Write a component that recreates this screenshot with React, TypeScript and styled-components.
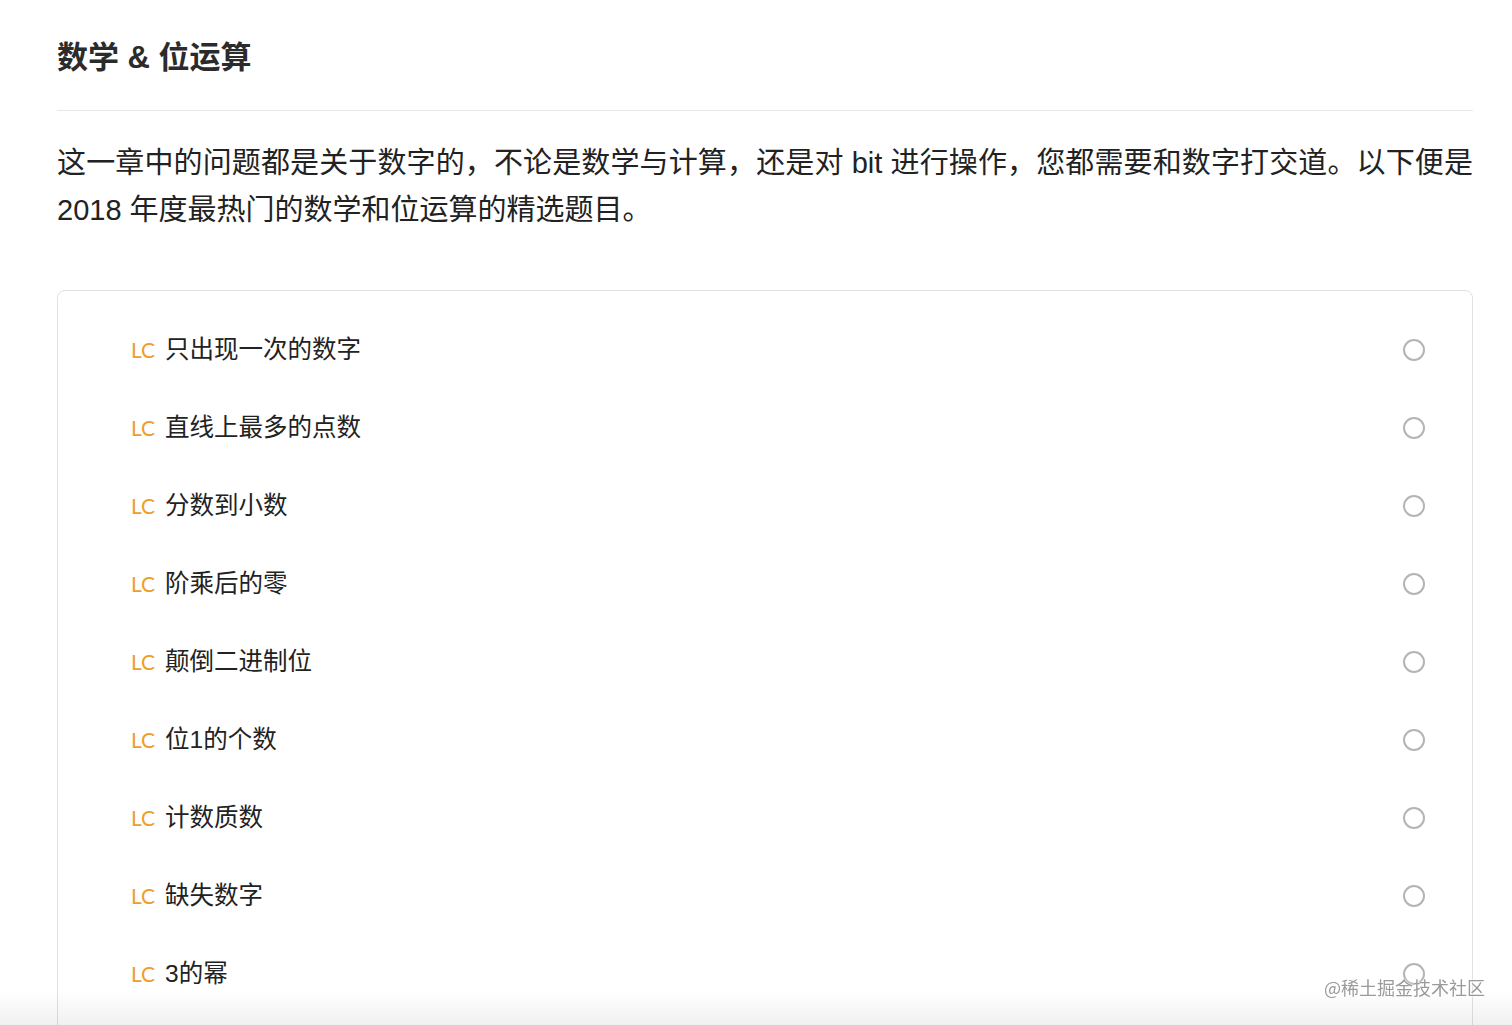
import React from 'react';
import styled, { createGlobalStyle } from 'styled-components';

const GlobalStyle = createGlobalStyle`
  html, body {
    margin: 0;
    padding: 0;
    background: #fff;
    overflow: hidden;
  }
  body {
    font-family: "Liberation Sans", "Noto Sans CJK SC", sans-serif;
    color: #262626;
  }
`;

const Page = styled.main`
  padding: 37px 39px 0 57px;
`;

const Title = styled.h2`
  margin: 0;
  font-size: 31px;
  line-height: 42px;
  font-weight: 700;
  color: #2b2b2b;
  padding-bottom: 31px;
  border-bottom: 1px solid #e8e8e8;
`;

const Intro = styled.p`
  margin: 29px 0 0;
  font-size: 29px;
  line-height: 47px;
  color: #222;
  text-align: justify;
`;

const Card = styled.section`
  margin-top: 56px;
  border: 1px solid #e2e2e2;
  border-radius: 8px;
  padding: 20px 47px 20px 73px;
`;

const Row = styled.div`
  display: flex;
  align-items: center;
  height: 78px;
`;

const Tag = styled.span`
  font-family: Lato, "Liberation Sans", sans-serif;
  font-weight: 400;
  font-size: 21px;
  line-height: 26px;
  color: #f09c2c;
  width: 34px;
  flex-shrink: 0;
`;

const Name = styled.span`
  flex: 1;
  font-size: 24.5px;
  line-height: 30px;
  padding-bottom: 1px;
  color: #222;
`;

const Check = styled.span`
  width: 18px;
  height: 18px;
  border: 2px solid #b4b4b4;
  border-radius: 50%;
  flex-shrink: 0;
`;

const Fade = styled.div`
  position: fixed;
  left: 0;
  right: 0;
  bottom: 0;
  height: 34px;
  background: linear-gradient(rgba(0, 0, 0, 0), rgba(0, 0, 0, 0.06));
  pointer-events: none;
`;

const Watermark = styled.div`
  position: fixed;
  right: 27px;
  bottom: 27px;
  font-family: "Noto Sans CJK SC", sans-serif;
  font-size: 18px;
  line-height: 22px;
  color: #9a9a9a;
  text-shadow: 0 0 2px #fff, 0 0 2px #fff;
  pointer-events: none;
`;

const problems = [
  '只出现一次的数字',
  '直线上最多的点数',
  '分数到小数',
  '阶乘后的零',
  '颠倒二进制位',
  '位1的个数',
  '计数质数',
  '缺失数字',
  '3的幂',
];

const App: React.FC = () => {
  return (
    <>
      <GlobalStyle />
      <Page>
        <Title>数学 &amp; 位运算</Title>
        <Intro>
          这一章中的问题都是关于数字的，不论是数学与计算，还是对 bit 进行操作，您都需要和数字打交道。以下便是
          2018 年度最热门的数学和位运算的精选题目。
        </Intro>
        <Card>
          {problems.map((name) => (
            <Row key={name}>
              <Tag>LC</Tag>
              <Name>{name}</Name>
              <Check />
            </Row>
          ))}
        </Card>
      </Page>
      <Fade />
      <Watermark>@稀土掘金技术社区</Watermark>
    </>
  );
};

export default App;
